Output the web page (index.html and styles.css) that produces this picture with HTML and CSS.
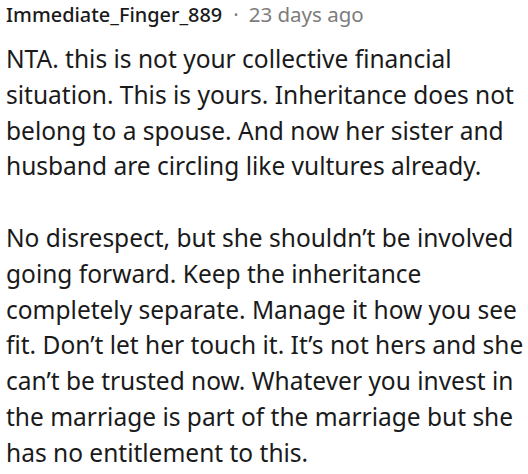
FILE: index.html
```html
<!DOCTYPE html>
<html lang="en">
<head>
<meta charset="utf-8">
<link rel="stylesheet" href="styles.css">
</head>
<body>
<div class="comment">
  <div class="meta"><span class="author">Immediate_Finger_889</span><span class="sep">·</span><span class="time">23 days ago</span></div>
  <div class="body">
    <p>NTA. this is not your collective financial situation. This is yours. Inheritance does not belong to a spouse. And now her sister and husband are circling like vultures already.</p>
    <p>No disrespect, but she shouldn’t be involved going forward. Keep the inheritance completely separate. Manage it how you see fit. Don’t let her touch it. It’s not hers and she can’t be trusted now. Whatever you invest in the marriage is part of the marriage but she has no entitlement to this.</p>
  </div>
</div>
</body>
</html>
```

FILE: styles.css
```css
html, body {
  margin: 0;
  padding: 0;
  background: #ffffff;
}
.comment {
  padding: 0 4px 0 6px;
  font-family: "Noto Sans", "Open Sans", sans-serif;
  color: #1a1a1b;
  width: 518px;
}
.meta {
  display: flex;
  align-items: baseline;
  font-size: 20.5px;
  line-height: 29px;
  height: 29px;
  white-space: nowrap;
}
.author {
  font-weight: 500;
  font-size: 19.9px;
  color: #1a1a1b;
}
.sep {
  color: #7c7c7c;
  padding: 0 10px 0 11px;
}
.time {
  color: #7c7c7c;
}
.body {
  padding-top: 12px;
  font-size: 24.5px;
  line-height: 35.8px;
}
.body p {
  margin: 0 0 35.8px 0;
}
.body p:last-child {
  margin-bottom: 0;
}
```
